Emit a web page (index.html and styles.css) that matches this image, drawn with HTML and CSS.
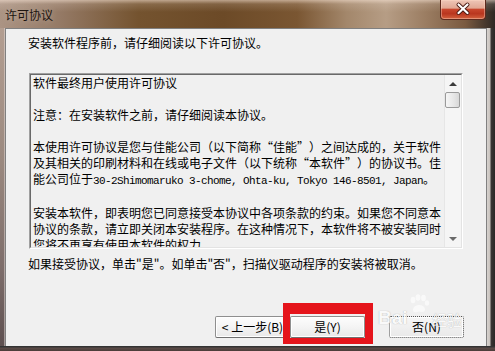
FILE: index.html
```html
<!DOCTYPE html>
<html lang="zh-CN">
<head>
    <meta charset="UTF-8">
    <title>许可协议</title>
    <link rel="stylesheet" href="styles.css">
</head>
<body>
    <div class="window">
        <div class="titlebar">
            <span class="title">许可协议</span>
            <button class="close-btn" aria-label="关闭">
                <svg width="46" height="20" viewBox="0 0 46 20">
                    <path d="M18.5 5.5 L27.5 14 M27.5 5.5 L18.5 14" stroke="#4a1a12" stroke-width="4" stroke-linecap="round" fill="none"/>
                    <path d="M18.5 5.5 L27.5 14 M27.5 5.5 L18.5 14" stroke="#ffffff" stroke-width="2.2" stroke-linecap="round" fill="none"/>
                </svg>
            </button>
        </div>
        <div class="body-row">
            <div class="frame-left"></div>
            <div class="client">
                <p class="intro">安装软件程序前，请仔细阅读以下许可协议。</p>
                <div class="license-box">
                    <div class="license-inner">
                        <div class="license-text">
                            <p>软件最终用户使用许可协议</p>
                            <p>注意：在安装软件之前，请仔细阅读本协议。</p>
                            <p>本使用许可协议是您与佳能公司（以下简称<span class="q-open">“</span>佳能<span class="q-close">”</span>）之间达成的，关于软件<br>及其相关的印刷材料和在线或电子文件（以下统称<span class="q-open">“</span>本软件<span class="q-close">”</span>）的协议书。佳<br>能公司位于<span class="latin">30-2Shimomaruko 3-chome, Ohta-ku, Tokyo 146-8501, Japan</span>。</p>
                            <p>安装本软件，即表明您已同意接受本协议中各项条款的约束。如果您不同意本<br>协议的条款，请立即关闭本安装程序。在这种情况下，本软件将不被安装同时<br>您将不再享有使用本软件的权力。</p>
                        </div>
                        <div class="scrollbar">
                            <div class="scroll-arrow up"></div>
                            <div class="scroll-thumb"></div>
                            <div class="scroll-track"></div>
                            <div class="scroll-arrow down"></div>
                        </div>
                    </div>
                </div>
                <p class="accept-note">如果接受协议，单击"是"。如单击"否"，扫描仪驱动程序的安装将被取消。</p>
                <div class="buttons">
                    <button class="btn">&lt; 上一步(B)</button>
                    <div class="highlight-wrap">
                        <button class="btn">是(Y)</button>
                        <span class="highlight"></span>
                    </div>
                    <button class="btn btn-no">否(N)</button>
                    <!-- watermark from the original screenshot -->
                    <div class="watermark">
                        <span class="wm-bai">Bai</span>
                        <svg class="wm-paw" width="22" height="20" viewBox="0 0 22 20">
                            <ellipse cx="5" cy="6" rx="2.4" ry="3.2" fill="#fff"/>
                            <ellipse cx="10" cy="3.5" rx="2.4" ry="3.2" fill="#fff"/>
                            <ellipse cx="15.5" cy="4" rx="2.4" ry="3.2" fill="#fff"/>
                            <ellipse cx="19" cy="9" rx="2.2" ry="2.8" fill="#fff"/>
                            <path d="M5 16 C5 10 16 9 17 15 C17.5 19 13 18 11 17.5 C9 18 5 19.5 5 16 Z" fill="#fff"/>
                        </svg>
                        <span class="wm-jy">经验</span>
                    </div>
                </div>
            </div>
            <div class="frame-right"></div>
        </div>
        <div class="frame-bottom"></div>
    </div>
</body>
</html>
```

FILE: styles.css
```css
body {
    margin: 0;
    font-family: "Noto Sans CJK SC", sans-serif;
    font-size: 12px;
    color: #000;
    background: #3a302c;
}
.window {
    width: 495px;
    height: 351px;
    display: flex;
    flex-direction: column;
    overflow: hidden;
}
.titlebar {
    height: 28px;
    flex: none;
    display: flex;
    align-items: flex-start;
    background:
        linear-gradient(to bottom, rgba(255, 236, 222, 0.55) 0, rgba(255, 240, 230, 0.15) 4px, rgba(255, 255, 255, 0) 12px),
        linear-gradient(to right, #ab9484 0%, #957a66 12%, #74532f 28%, #6c4a27 45%, #7a5632 60%, #a3876b 70%, #b69d85 78%, #9b7d62 86%, #7a5a40 94%, #2e2824 100%);
}
.title {
    padding: 7px 0 0 5px;
    line-height: 16px;
    color: #1c1410;
    text-shadow: 0 0 6px rgba(255, 245, 235, 0.35);
}
.close-btn {
    margin-left: auto;
    margin-right: 9px;
    width: 46px;
    height: 20px;
    padding: 0;
    border: 1px solid #5e2a1e;
    border-top: none;
    border-radius: 0 0 4px 4px;
    background: linear-gradient(to bottom, #eec6b7 0%, #e1a894 42%, #c8462d 50%, #b9361f 72%, #d4623f 100%);
    box-shadow: inset 0 0 0 1px rgba(255, 220, 200, 0.4);
    display: block;
}
.close-btn svg {
    display: block;
    margin: -1px 0 0 -1px;
}
.body-row {
    flex: 1;
    display: flex;
    min-height: 0;
}
.frame-left {
    width: 5px;
    background: linear-gradient(to bottom, #b39e91 0%, #9c8a80 40%, #7e6e6b 75%, #5e5050 100%);
    box-shadow: inset -1px 0 0 rgba(230, 220, 215, 0.5);
}
.frame-right {
    width: 8px;
    background: linear-gradient(to right, #d6d2ce 0, #c8c2bd 3px, #3a3634 4px, #2a2826 100%);
}
.frame-bottom {
    height: 5px;
    flex: none;
    background: linear-gradient(to bottom, #333 0, #333 1px, #5c4c48 2px, #4a3c38 100%);
}
.client {
    width: 482px;
    box-sizing: border-box;
    border: 1px solid #808080;
    border-bottom: none;
    background: #f0f0f0;
    padding: 0 22px 8px 22px;
    display: flex;
    flex-direction: column;
}
.client p {
    margin: 0;
    line-height: 16px;
    white-space: nowrap;
}
.intro {
    margin-top: 6px !important;
}
.license-box {
    margin: 22px 0 0 1px;
    width: 434px;
    height: 176px;
    box-sizing: border-box;
    border: 1px solid;
    border-color: #a0a0a0 #ffffff #ffffff #a0a0a0;
}
.license-inner {
    height: 100%;
    box-sizing: border-box;
    border: 1px solid;
    border-color: #696969 #e3e3e3 #e3e3e3 #696969;
    background: #f0f0f0;
    display: flex;
}
.license-text {
    flex: 1;
    overflow: hidden;
    padding-left: 2px;
}
.license-text p {
    margin-bottom: 16px;
}
.q-open,
.q-close {
    display: inline-block;
    width: 12px;
}
.q-open {
    text-align: right;
}
.q-close {
    text-align: left;
}
.latin {
    font-family: "Liberation Mono", monospace;
    font-size: 11px;
    letter-spacing: -0.6px;
}
.scrollbar {
    width: 17px;
    flex: none;
    display: flex;
    flex-direction: column;
    background: #f5f5f5;
    box-shadow: inset 1px 0 0 #e6e6e6;
}
.scroll-arrow {
    height: 17px;
    display: flex;
    align-items: center;
    justify-content: center;
}
.scroll-arrow::before {
    content: "";
    border-left: 4px solid transparent;
    border-right: 4px solid transparent;
}
.scroll-arrow.up::before {
    border-bottom: 4px solid #3c3c3c;
}
.scroll-arrow.down::before {
    border-top: 4px solid #6a6a6a;
}
.scroll-thumb {
    height: 16px;
    margin: 0 1px 0 1px;
    box-sizing: border-box;
    border: 1px solid #9a9a9a;
    border-radius: 2px;
    background: linear-gradient(to right, #f6f6f6, #e6e6e6 60%, #d8d8d8);
}
.scroll-track {
    flex: 1;
}
.accept-note {
    margin-top: 7px !important;
}
.buttons {
    margin-top: auto;
    position: relative;
    display: flex;
    justify-content: flex-end;
}
.btn {
    width: 75px;
    height: 22px;
    box-sizing: border-box;
    padding: 0;
    font-family: inherit;
    font-size: 12px;
    line-height: 20px;
    color: #000;
    border: 1px solid #8f8f8f;
    border-bottom-color: #707070;
    border-radius: 2px;
    background: linear-gradient(to bottom, #fdfdfd 0%, #f4f4f4 50%, #e8e8e8 100%);
    box-shadow: inset 0 0 0 1px #ffffff;
}
.btn-no {
    margin-left: 24px;
    border: 1px dotted #555;
    background: linear-gradient(to bottom, #f6f6f6, #e9e9e9);
}
.highlight-wrap {
    position: relative;
}
.highlight-wrap .btn {
    display: block;
}
/* red annotation box drawn over the yes button */
.highlight {
    position: absolute;
    top: -13px;
    left: -7px;
    right: -8px;
    bottom: -6px;
    border-style: solid;
    border-color: #e5141b;
    border-width: 11px 8px 6px 7px;
    pointer-events: none;
}
.watermark {
    position: absolute;
    left: 350px;
    top: -22px;
    width: 90px;
    height: 44px;
    opacity: 0.6;
    pointer-events: none;
}
.wm-bai {
    position: absolute;
    left: 0;
    top: 13px;
    font-family: "Liberation Sans", sans-serif;
    font-size: 19px;
    font-weight: bold;
    color: #fff;
    text-shadow: 0 0 1px #777;
}
.wm-paw {
    position: absolute;
    left: 30px;
    top: 0;
}
.wm-jy {
    position: absolute;
    left: 54px;
    top: 15px;
    font-size: 15px;
    color: #fff;
    text-shadow: 0 0 1px #777;
}
```
